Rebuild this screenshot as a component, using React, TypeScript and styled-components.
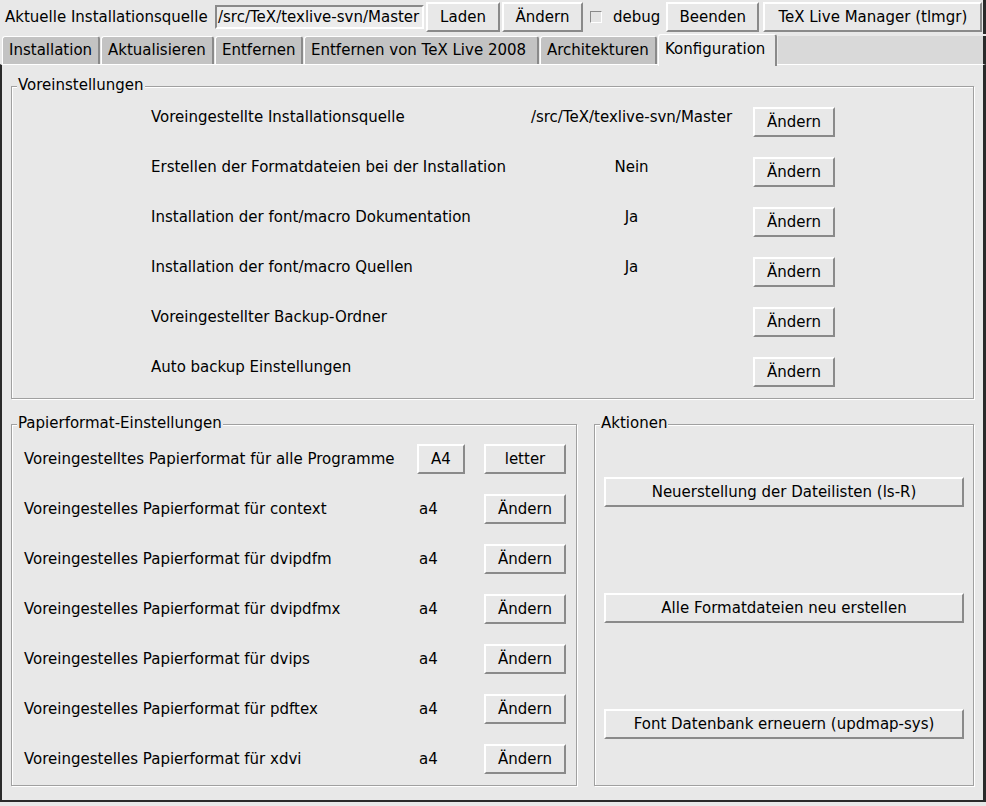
import React from 'react';
import styled, { createGlobalStyle } from 'styled-components';

const Global = createGlobalStyle`
  html, body { margin: 0; padding: 0; background: #e8e8e8; }
  body {
    font-family: "DejaVu Sans", "Noto Sans", sans-serif;
    font-size: 15px;
    line-height: 17px;
    color: #000;
  }
  * { box-sizing: border-box; }
`;

const Window = styled.div`
  width: 986px;
  height: 806px;
  display: flex;
  flex-direction: column;
  background: #e8e8e8;
  overflow: hidden;
  padding-bottom: 4px;
`;

const TopBar = styled.div`
  height: 34px;
  flex: none;
  display: flex;
  align-items: center;
  padding-left: 5px;
  border-right: 3px solid #2a2a2a;
`;

const TopLabel = styled.span`
  width: 210px;
  white-space: nowrap;
`;

const Entry = styled.div`
  width: 209px;
  height: 24px;
  margin-right: 2px;
  border: 2px solid;
  border-color: #8a8a8a #ffffff #ffffff #8a8a8a;
  background: #ececec;
  padding-left: 1px;
  display: flex;
  align-items: center;
  white-space: nowrap;
  overflow: hidden;
`;

const Button = styled.button<{ $w?: number; $gap?: number }>`
  font: inherit;
  color: #000;
  height: 30px;
  width: ${p => (p.$w ? `${p.$w}px` : 'auto')};
  margin-right: ${p => p.$gap ?? 0}px;
  padding: 0;
  flex: none;
  background: #e8e8e8;
  border: 2px solid;
  border-color: #ffffff #8a8a8a #8a8a8a #ffffff;
  border-radius: 0;
  display: flex;
  align-items: center;
  justify-content: center;
  white-space: nowrap;
`;

const CheckWrap = styled.label`
  display: flex;
  align-items: center;
  margin-left: 7px;
  margin-right: 6px;
  gap: 11px;
`;

const CheckBox = styled.span`
  width: 12px;
  height: 12px;
  border: 1px solid;
  border-color: #8a8a8a #ffffff #ffffff #8a8a8a;
  background: #e4e4e4;
  display: inline-block;
`;

const TabStrip = styled.div`
  height: 30px;
  flex: none;
  display: flex;
  align-items: flex-end;
  padding-left: 2px;
  position: relative;
  z-index: 1;
`;

const Tab = styled.div<{ $w: number; $active?: boolean }>`
  width: ${p => p.$w}px;
  height: ${p => (p.$active ? 32 : 28)}px;
  margin-bottom: ${p => (p.$active ? -2 : 0)}px;
  margin-right: 1px;
  background: ${p => (p.$active ? '#e8e8e8' : '#c3c3c3')};
  border-top: 1px solid #ffffff;
  border-left: 1px solid #ffffff;
  border-right: 2px solid #8a8a8a;
  border-radius: 3px 3px 0 0;
  padding-left: 6px;
  padding-bottom: ${p => (p.$active ? 3 : 0)}px;
  display: flex;
  align-items: center;
  white-space: nowrap;
  flex: none;
`;

const TabFiller = styled.div`
  flex: 1;
  height: 28px;
  background: #d9d9d9;
  border-right: 3px solid #2a2a2a;
`;

const Pane = styled.div`
  flex: 1;
  display: flex;
  flex-direction: column;
  border-top: 1px solid #ffffff;
  border-left: 2px solid #2a2a2a;
  border-right: 3px solid #2a2a2a;
  border-bottom: 2px solid #2a2a2a;
  padding: 21px 9px 0 9px;
`;

const Frame = styled.div<{ $w?: number; $h?: number }>`
  position: relative;
  width: ${p => (p.$w ? `${p.$w}px` : 'auto')};
  height: ${p => (p.$h ? `${p.$h}px` : 'auto')};
  border: 1px solid #a0a0a0;
  box-shadow: inset 1px 1px 0 #ffffff, 1px 1px 0 #ffffff;
  flex: none;
`;

const Legend = styled.span`
  position: absolute;
  top: -10px;
  left: 5px;
  padding: 0 1px;
  background: #e8e8e8;
  white-space: nowrap;
`;

const PrefGrid = styled.div`
  display: grid;
  grid-template-columns: 374px 228px 82px;
  grid-auto-rows: 30px;
  row-gap: 20px;
  padding: 20px 0 11px 139px;
  align-items: start;
`;

const Cell = styled.span`
  white-space: nowrap;
  padding-top: 2px;
`;

const ValueCell = styled.span`
  white-space: nowrap;
  text-align: center;
  padding-right: 15px;
  padding-top: 2px;
`;

const BottomRow = styled.div`
  display: flex;
  gap: 17px;
  margin-top: 25px;
`;

const PaperGrid = styled.div`
  display: grid;
  grid-template-columns: 393px 48px 82px;
  column-gap: 0;
  grid-auto-rows: 30px;
  row-gap: 20px;
  padding: 19px 0 10px 12px;
  align-items: center;
`;

const PaperCell = styled.span`
  white-space: nowrap;
`;

const PaperValue = styled.span`
  padding-left: 2px;
`;

const ColButton = styled(Button)`
  width: 82px;
  margin-left: 19px;
`;

const ActionList = styled.div`
  display: flex;
  flex-direction: column;
  gap: 86px;
  padding: 52px 9px 0 9px;
`;

const prefs: [string, string][] = [
  ['Voreingestellte Installationsquelle', '/src/TeX/texlive-svn/Master'],
  ['Erstellen der Formatdateien bei der Installation', 'Nein'],
  ['Installation der font/macro Dokumentation', 'Ja'],
  ['Installation der font/macro Quellen', 'Ja'],
  ['Voreingestellter Backup-Ordner', ''],
  ['Auto backup Einstellungen', ''],
];

const papers = ['context', 'dvipdfm', 'dvipdfmx', 'dvips', 'pdftex', 'xdvi'];

const tabs: [string, number][] = [
  ['Installation', 98],
  ['Aktualisieren', 113],
  ['Entfernen', 88],
  ['Entfernen von TeX Live 2008', 235],
  ['Architekturen', 117],
];

export default function App() {
  return (
    <Window>
      <Global />
      <TopBar>
        <TopLabel>Aktuelle Installationsquelle</TopLabel>
        <Entry>/src/TeX/texlive-svn/Master</Entry>
        <Button $w={74} $gap={2}>Laden</Button>
        <Button $w={81}>Ändern</Button>
        <CheckWrap>
          <CheckBox />
          <span>debug</span>
        </CheckWrap>
        <Button $w={93} $gap={4}>Beenden</Button>
        <Button $w={219}>TeX Live Manager (tlmgr)</Button>
      </TopBar>
      <TabStrip>
        {tabs.map(([t, w]) => (
          <Tab key={t} $w={w}>{t}</Tab>
        ))}
        <Tab $w={119} $active>Konfiguration</Tab>
        <TabFiller />
      </TabStrip>
      <Pane>
        <Frame>
          <Legend>Voreinstellungen</Legend>
          <PrefGrid>
            {prefs.map(([l, v]) => (
              <React.Fragment key={l}>
                <Cell>{l}</Cell>
                <ValueCell>{v}</ValueCell>
                <Button $w={82}>Ändern</Button>
              </React.Fragment>
            ))}
          </PrefGrid>
        </Frame>
        <BottomRow>
          <Frame $w={566} $h={362}>
            <Legend>Papierformat-Einstellungen</Legend>
            <PaperGrid>
              <PaperCell>Voreingestelltes Papierformat für alle Programme</PaperCell>
              <Button $w={48}>A4</Button>
              <ColButton>letter</ColButton>
              {papers.map(p => (
                <React.Fragment key={p}>
                  <PaperCell>Voreingestelles Papierformat für {p}</PaperCell>
                  <PaperValue>a4</PaperValue>
                  <ColButton>Ändern</ColButton>
                </React.Fragment>
              ))}
            </PaperGrid>
          </Frame>
          <Frame $w={380} $h={362}>
            <Legend>Aktionen</Legend>
            <ActionList>
              <Button>Neuerstellung der Dateilisten (ls-R)</Button>
              <Button>Alle Formatdateien neu erstellen</Button>
              <Button>Font Datenbank erneuern (updmap-sys)</Button>
            </ActionList>
          </Frame>
        </BottomRow>
      </Pane>
    </Window>
  );
}
